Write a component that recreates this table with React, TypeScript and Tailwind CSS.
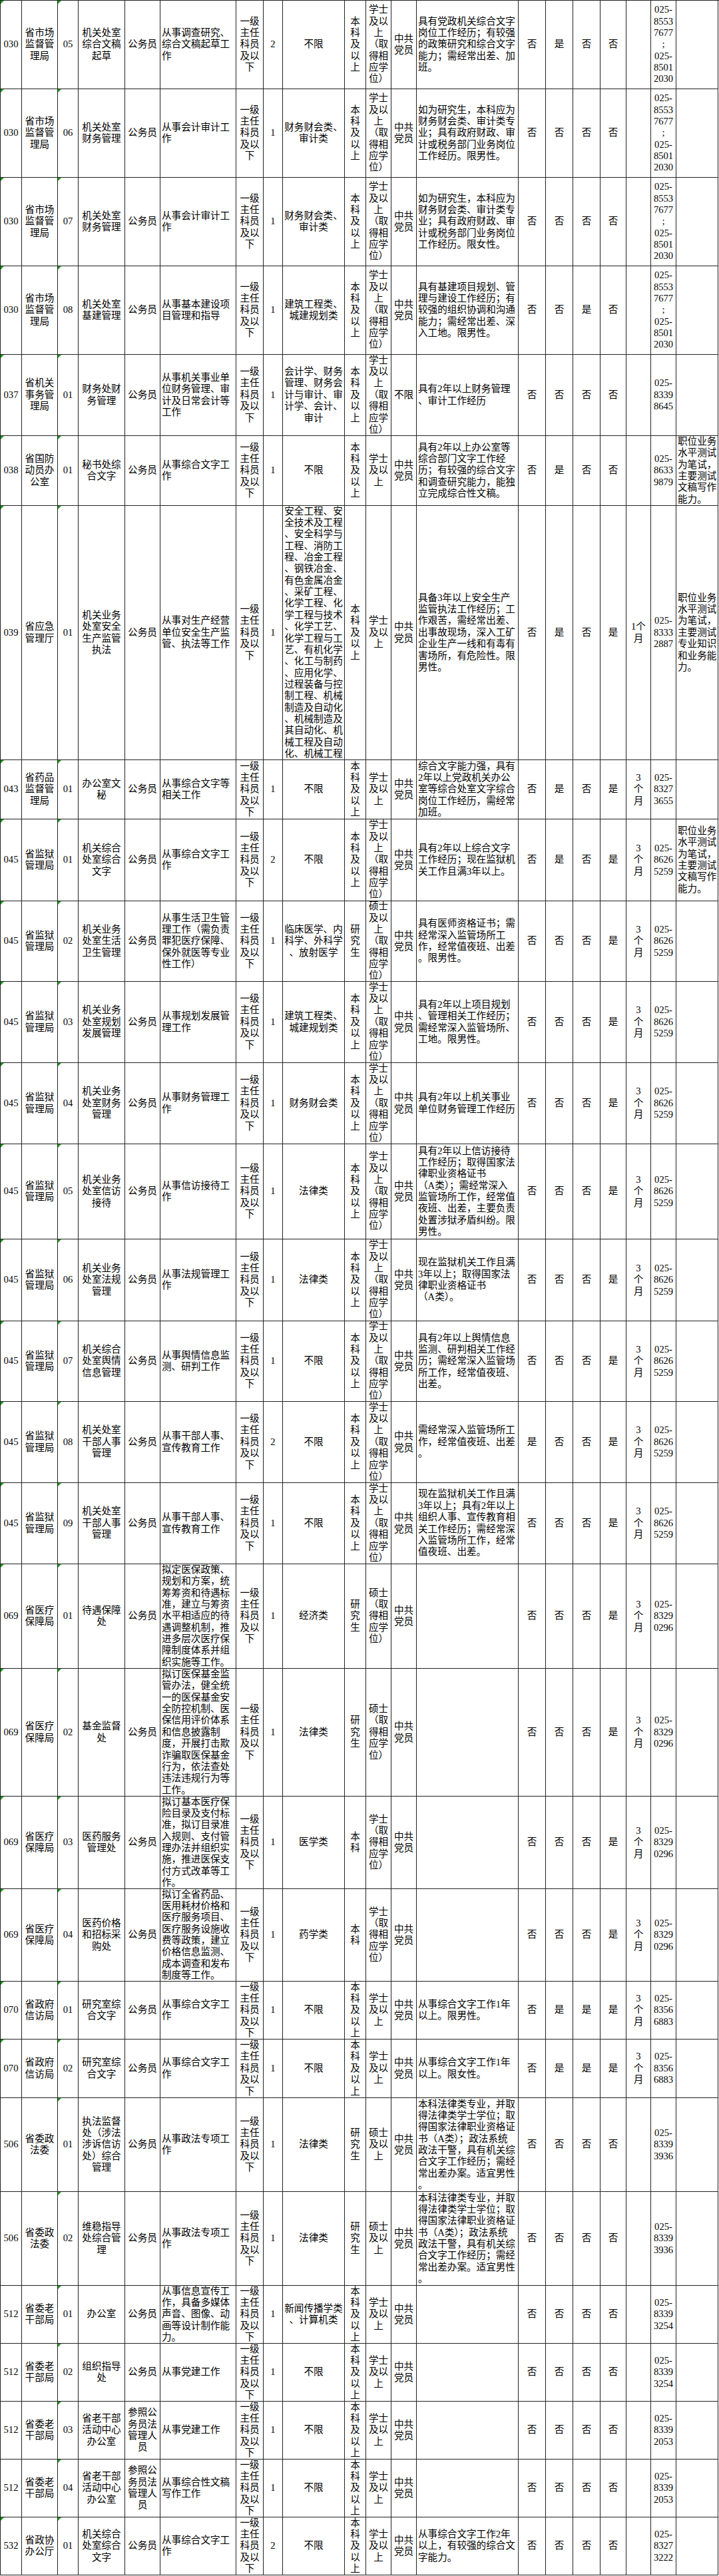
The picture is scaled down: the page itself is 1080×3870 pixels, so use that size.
import React from 'react';

const LEVEL = '一级/主任/科员/及以/下';
const EDU = '本/科/及/以/上';
const DEG_FULL = '学士/及以/上/（取/得相/应学/位）';
const DEG = '学士/及以/上';
const PARTY = '中共/党员';
const GWY = '公务员';
const M3 = '3/个/月';
const P030 = '025-/8553/7677/;/025-/8501/2030';
const P045 = '025-/8626/5259';
const P069 = '025-/8329/0296';
const NOTE_WRITE = '职位业务/水平测试/为笔试，/主要测试/文稿写作/能力。';

interface Row {
  h: string;
  tri: boolean;
  code: string;
  dept: string;
  pos: string;
  name: string;
  kind?: string;
  desc: string;
  num: string;
  major: string;
  edu?: string;
  deg: string;
  party?: string;
  cond: string;
  yn: string[];
  period?: string;
  phone: string;
  note?: string;
}

const rows: Row[] = [
  {
    h: 'h-[133px]', tri: true, code: '030', dept: '省市场/监督管/理局', pos: '05', name: '机关处室/综合文稿/起草',
    desc: '从事调查研究、/综合文稿起草工/作', num: '2', major: '不限', deg: DEG_FULL,
    cond: '具有党政机关综合文字/岗位工作经历；有较强/的政策研究和综合文字/能力；需经常出差、加/班。',
    yn: ['否', '是', '否', '否'], phone: P030,
  },
  {
    h: 'h-[133px]', tri: true, code: '030', dept: '省市场/监督管/理局', pos: '06', name: '机关处室/财务管理',
    desc: '从事会计审计工/作', num: '1', major: '财务财会类、/审计类', deg: DEG_FULL,
    cond: '如为研究生，本科应为/财务财会类、审计类专/业；具有政府财政、审/计或税务部门业务岗位/工作经历。限男性。',
    yn: ['否', '否', '否', '否'], phone: P030,
  },
  {
    h: 'h-[133px]', tri: true, code: '030', dept: '省市场/监督管/理局', pos: '07', name: '机关处室/财务管理',
    desc: '从事会计审计工/作', num: '1', major: '财务财会类、/审计类', deg: DEG_FULL,
    cond: '如为研究生，本科应为/财务财会类、审计类专/业；具有政府财政、审/计或税务部门业务岗位/工作经历。限女性。',
    yn: ['否', '否', '否', '否'], phone: P030,
  },
  {
    h: 'h-[133px]', tri: true, code: '030', dept: '省市场/监督管/理局', pos: '08', name: '机关处室/基建管理',
    desc: '从事基本建设项/目管理和指导', num: '1', major: '建筑工程类、/城建规划类', deg: DEG_FULL,
    cond: '具有基建项目规划、管/理与建设工作经历；有/较强的组织协调和沟通/能力；需经常出差、深/入工地。限男性。',
    yn: ['否', '否', '是', '否'], phone: P030,
  },
  {
    h: 'h-[122px]', tri: true, code: '037', dept: '省机关/事务管/理局', pos: '01', name: '财务处财/务管理',
    desc: '从事机关事业单/位财务管理、审/计及日常会计等/工作', num: '1',
    major: '会计学、财务/管理、财务会/计与审计、审/计学、会计、/审计', deg: DEG_FULL, party: '不限',
    cond: '具有2年以上财务管理/、审计工作经历', yn: ['否', '否', '否', '否'], phone: '025-/8339/8645',
  },
  {
    h: 'h-[105px]', tri: true, code: '038', dept: '省国防/动员办/公室', pos: '01', name: '秘书处综/合文字',
    desc: '从事综合文字工/作', num: '1', major: '不限', deg: DEG,
    cond: '具有2年以上办公室等/综合部门文字工作经/历；有较强的综合文字/和调查研究能力，能独/立完成综合性文稿。',
    yn: ['否', '是', '否', '否'], phone: '025-/8633/9879', note: NOTE_WRITE,
  },
  {
    h: 'h-[382px]', tri: true, code: '039', dept: '省应急/管理厅', pos: '01', name: '机关业务/处室安全/生产监管/执法',
    desc: '从事对生产经营/单位安全生产监/管、执法等工作', num: '1',
    major:
      '安全工程、安/全技术及工程/、安全科学与/工程、消防工/程、冶金工程/、钢铁冶金、/有色金属冶金/、采矿工程、/化学工程、化/学工程与技术/、化学工艺、/化学工程与工/艺、有机化学/、化工与制药/、应用化学、/过程装备与控/制工程、机械/制造及自动化/、机械制造及/其自动化、机/械工程及自动/化、机械工程',
    deg: DEG,
    cond: '具备3年以上安全生产/监管执法工作经历；工/作艰苦，需经常出差、/出事故现场，深入工矿/企业生产一线和有毒有/害场所，有危险性。限/男性。',
    yn: ['否', '是', '否', '是'], period: '1个/月', phone: '025-/8333/2887',
    note: '职位业务/水平测试/为笔试，/主要测试/专业知识/和业务能/力。',
  },
  {
    h: 'h-[89px]', tri: true, code: '043', dept: '省药品/监督管/理局', pos: '01', name: '办公室文/秘',
    desc: '从事综合文字等/相关工作', num: '1', major: '不限', deg: DEG,
    cond: '综合文字能力强，具有/2年以上党政机关办公/室等综合处室文字综合/岗位工作经历，需经常/加班。',
    yn: ['否', '是', '否', '是'], period: M3, phone: '025-/8327/3655',
  },
  {
    h: 'h-[123px]', tri: true, code: '045', dept: '省监狱/管理局', pos: '01', name: '机关综合/处室综合/文字',
    desc: '从事综合文字工/作', num: '2', major: '不限', deg: DEG_FULL,
    cond: '具有2年以上综合文字/工作经历；现在监狱机/关工作且满3年以上。',
    yn: ['否', '是', '否', '是'], period: M3, phone: P045, note: NOTE_WRITE,
  },
  {
    h: 'h-[121px]', tri: true, code: '045', dept: '省监狱/管理局', pos: '02', name: '机关业务/处室生活/卫生管理',
    desc: '从事生活卫生管/理工作（需负责/罪犯医疗保障、/保外就医等专业/性工作）', num: '1',
    major: '临床医学、内/科学、外科学/、放射医学', edu: '研/究/生', deg: '硕士/及以/上/（取/得相/应学/位）',
    cond: '具有医师资格证书；需/经常深入监管场所工/作，经常值夜班、出差/。限男性。',
    yn: ['否', '否', '否', '是'], period: M3, phone: P045,
  },
  {
    h: 'h-[122px]', tri: true, code: '045', dept: '省监狱/管理局', pos: '03', name: '机关业务/处室规划/发展管理',
    desc: '从事规划发展管/理工作', num: '1', major: '建筑工程类、/城建规划类', deg: DEG_FULL,
    cond: '具有2年以上项目规划/、管理相关工作经历；/需经常深入监管场所、/工地。限男性。',
    yn: ['否', '否', '否', '是'], period: M3, phone: P045,
  },
  {
    h: 'h-[122px]', tri: true, code: '045', dept: '省监狱/管理局', pos: '04', name: '机关业务/处室财务/管理',
    desc: '从事财务管理工/作', num: '1', major: '财务财会类', deg: DEG_FULL,
    cond: '具有2年以上机关事业/单位财务管理工作经历',
    yn: ['否', '否', '否', '是'], period: M3, phone: P045,
  },
  {
    h: 'h-[143px]', tri: true, code: '045', dept: '省监狱/管理局', pos: '05', name: '机关业务/处室信访/接待',
    desc: '从事信访接待工/作', num: '1', major: '法律类', deg: DEG_FULL,
    cond: '具有2年以上信访接待/工作经历；取得国家法/律职业资格证书/（A类）；需经常深入/监管场所工作，经常值/夜班、出差，主要负责/处置涉狱矛盾纠纷。限/男性。',
    yn: ['否', '否', '否', '是'], period: M3, phone: P045,
  },
  {
    h: 'h-[123px]', tri: true, code: '045', dept: '省监狱/管理局', pos: '06', name: '机关业务/处室法规/管理',
    desc: '从事法规管理工/作', num: '1', major: '法律类', deg: DEG_FULL,
    cond: '现在监狱机关工作且满/3年以上；取得国家法/律职业资格证书/（A类）。',
    yn: ['否', '否', '否', '是'], period: M3, phone: P045,
  },
  {
    h: 'h-[121px]', tri: true, code: '045', dept: '省监狱/管理局', pos: '07', name: '机关综合/处室舆情/信息管理',
    desc: '从事舆情信息监/测、研判工作', num: '1', major: '不限', deg: DEG_FULL,
    cond: '具有2年以上舆情信息/监测、研判相关工作经/历；需经常深入监管场/所工作，经常值夜班、/出差。',
    yn: ['否', '否', '否', '是'], period: M3, phone: P045,
  },
  {
    h: 'h-[122px]', tri: true, code: '045', dept: '省监狱/管理局', pos: '08', name: '机关处室/干部人事/管理',
    desc: '从事干部人事、/宣传教育工作', num: '2', major: '不限', deg: DEG_FULL,
    cond: '需经常深入监管场所工/作，经常值夜班、出差/。',
    yn: ['是', '否', '否', '是'], period: M3, phone: P045,
  },
  {
    h: 'h-[122px]', tri: true, code: '045', dept: '省监狱/管理局', pos: '09', name: '机关处室/干部人事/管理',
    desc: '从事干部人事、/宣传教育工作', num: '1', major: '不限', deg: DEG_FULL,
    cond: '现在监狱机关工作且满/3年以上；具有2年以上/组织人事、宣传教育相/关工作经历；需经常深/入监管场所工作，经常/值夜班、出差。',
    yn: ['否', '否', '否', '是'], period: M3, phone: P045,
  },
  {
    h: 'h-[157px]', tri: true, code: '069', dept: '省医疗/保障局', pos: '01', name: '待遇保障/处',
    desc: '拟定医保政策、/规划和方案，统/筹筹资和待遇标/准，建立与筹资/水平相适应的待/遇调整机制，推/进多层次医疗保/障制度体系并组/织实施等工作。',
    num: '1', major: '经济类', edu: '研/究/生', deg: '硕士/（取/得相/应学/位）', cond: '',
    yn: ['否', '否', '否', '是'], period: M3, phone: P069,
  },
  {
    h: 'h-[192px]', tri: true, code: '069', dept: '省医疗/保障局', pos: '02', name: '基金监督/处',
    desc: '拟订医保基金监/管办法，健全统/一的医保基金安/全防控机制、医/保信用评价体系/和信息披露制/度，开展打击欺/诈骗取医保基金/行为，依法查处/违法违规行为等/工作。',
    num: '1', major: '法律类', edu: '研/究/生', deg: '硕士/（取/得相/应学/位）', cond: '',
    yn: ['否', '否', '否', '是'], period: M3, phone: P069,
  },
  {
    h: 'h-[139px]', tri: true, code: '069', dept: '省医疗/保障局', pos: '03', name: '医药服务/管理处',
    desc: '拟订基本医疗保/险目录及支付标/准，拟订目录准/入规则、支付管/理办法并组织实/施，推进医保支/付方式改革等工/作。',
    num: '1', major: '医学类', edu: '本/科', deg: '学士/（取/得相/应学/位）', cond: '',
    yn: ['否', '否', '否', '是'], period: M3, phone: P069,
  },
  {
    h: 'h-[139px]', tri: true, code: '069', dept: '省医疗/保障局', pos: '04', name: '医药价格/和招标采/购处',
    desc: '拟订全省药品、/医用耗材价格和/医疗服务项目、/医疗服务设施收/费等政策，建立/价格信息监测、/成本调查和发布/制度等工作。',
    num: '1', major: '药学类', edu: '本/科', deg: '学士/（取/得相/应学/位）', cond: '',
    yn: ['否', '否', '否', '是'], period: M3, phone: P069,
  },
  {
    h: 'h-[87px]', tri: true, code: '070', dept: '省政府/信访局', pos: '01', name: '研究室综/合文字',
    desc: '从事综合文字工/作', num: '1', major: '不限', deg: DEG,
    cond: '从事综合文字工作1年/以上。限男性。', yn: ['否', '是', '是', '是'], period: M3, phone: '025-/8356/6883',
  },
  {
    h: 'h-[88px]', tri: true, code: '070', dept: '省政府/信访局', pos: '02', name: '研究室综/合文字',
    desc: '从事综合文字工/作', num: '1', major: '不限', deg: DEG,
    cond: '从事综合文字工作1年/以上。限女性。', yn: ['否', '是', '是', '是'], period: M3, phone: '025-/8356/6883',
  },
  {
    h: 'h-[141px]', tri: false, code: '506', dept: '省委政/法委', pos: '01', name: '执法监督/处（涉法/涉诉信访/处）综合/管理',
    desc: '从事政法专项工/作', num: '1', major: '法律类', edu: '研/究/生', deg: '硕士/及以/上',
    cond: '本科法律类专业，并取/得法律类学士学位；取/得国家法律职业资格证/书（A类）；政法系统/政法干警，具有机关综/合文字工作经历；需经/常出差办案。适宜男性/。',
    yn: ['否', '否', '否', '否'], phone: '025-/8339/3936',
  },
  {
    h: 'h-[141px]', tri: false, code: '506', dept: '省委政/法委', pos: '02', name: '维稳指导/处综合管/理',
    desc: '从事政法专项工/作', num: '1', major: '法律类', edu: '研/究/生', deg: '硕士/及以/上',
    cond: '本科法律类专业，并取/得法律类学士学位；取/得国家法律职业资格证/书（A类）；政法系统/政法干警，具有机关综/合文字工作经历；需经/常出差办案。适宜男性/。',
    yn: ['否', '否', '否', '否'], phone: '025-/8339/3936',
  },
  {
    h: 'h-[87px]', tri: false, code: '512', dept: '省委老/干部局', pos: '01', name: '办公室',
    desc: '从事信息宣传工/作，具备多媒体/声音、图像、动/画等设计制作能/力。', num: '1',
    major: '新闻传播学类/、计算机类', deg: DEG, cond: '', yn: ['否', '否', '否', '否'], phone: '025-/8339/3254',
  },
  {
    h: 'h-[87px]', tri: false, code: '512', dept: '省委老/干部局', pos: '02', name: '组织指导/处',
    desc: '从事党建工作', num: '1', major: '不限', deg: DEG, cond: '',
    yn: ['否', '否', '否', '否'], phone: '025-/8339/3254',
  },
  {
    h: 'h-[87px]', tri: false, code: '512', dept: '省委老/干部局', pos: '03', name: '省老干部/活动中心/办公室',
    kind: '参照公/务员法/管理人/员', desc: '从事党建工作', num: '1', major: '不限', deg: DEG, cond: '',
    yn: ['否', '否', '否', '否'], phone: '025-/8339/2053',
  },
  {
    h: 'h-[87px]', tri: false, code: '512', dept: '省委老/干部局', pos: '04', name: '省老干部/活动中心/办公室',
    kind: '参照公/务员法/管理人/员', desc: '从事综合性文稿/写作工作', num: '1', major: '不限', deg: DEG, cond: '',
    yn: ['否', '否', '否', '否'], phone: '025-/8339/2053',
  },
  {
    h: 'h-[87px]', tri: true, code: '532', dept: '省政协/办公厅', pos: '01', name: '机关综合/处室综合/文字',
    desc: '从事综合文字工/作', num: '2', major: '不限', deg: DEG,
    cond: '从事综合文字工作2年/以上，有较强的综合文/字能力。', yn: ['否', '否', '否', '否'], phone: '025-/8327/3222',
  },
];

function Cell({ text = '', left = false, tri = false }: { text?: string; left?: boolean; tri?: boolean }) {
  return (
    <div
      className={
        left
          ? 'relative flex items-center justify-start overflow-hidden border-r border-b border-[#222] px-[2px] text-left'
          : 'relative flex items-center justify-center overflow-hidden border-r border-b border-[#222] px-[2px] text-center'
      }
    >
      {tri && (
        <span className="absolute left-0 top-0 h-0 w-0 border-t-[5px] border-r-[5px] border-t-[#1e9a1e] border-r-transparent" />
      )}
      <span className="whitespace-pre">{text.split('/').join('\n')}</span>
    </div>
  );
}

export default function App() {
  return (
    <div className="w-[1080px] bg-white text-black font-['Liberation_Serif','Noto_Sans_CJK_SC',serif] text-[14.6px] leading-[17.35px]">
      <div className="border-t border-l border-[#222]">
        {rows.map((r, i) => (
          <div
            key={i}
            className={`grid grid-cols-[32px_54px_31px_70px_53px_114px_41px_29px_93px_32px_38px_38px_153px_41px_41px_41px_39px_37px_38px_63px] ${r.h}`}
          >
            <Cell text={r.code} tri={r.tri} />
            <Cell text={r.dept} />
            <Cell text={r.pos} tri />
            <Cell text={r.name} />
            <Cell text={r.kind ?? GWY} />
            <Cell text={r.desc} left />
            <Cell text={LEVEL} />
            <Cell text={r.num} />
            <Cell text={r.major} />
            <Cell text={r.edu ?? EDU} />
            <Cell text={r.deg} />
            <Cell text={r.party ?? PARTY} />
            <Cell text={r.cond} left />
            {r.yn.map((v, j) => (
              <Cell key={j} text={v} />
            ))}
            <Cell text={r.period ?? ''} />
            <Cell text={r.phone} />
            <Cell text={r.note ?? ''} left />
          </div>
        ))}
      </div>
    </div>
  );
}
